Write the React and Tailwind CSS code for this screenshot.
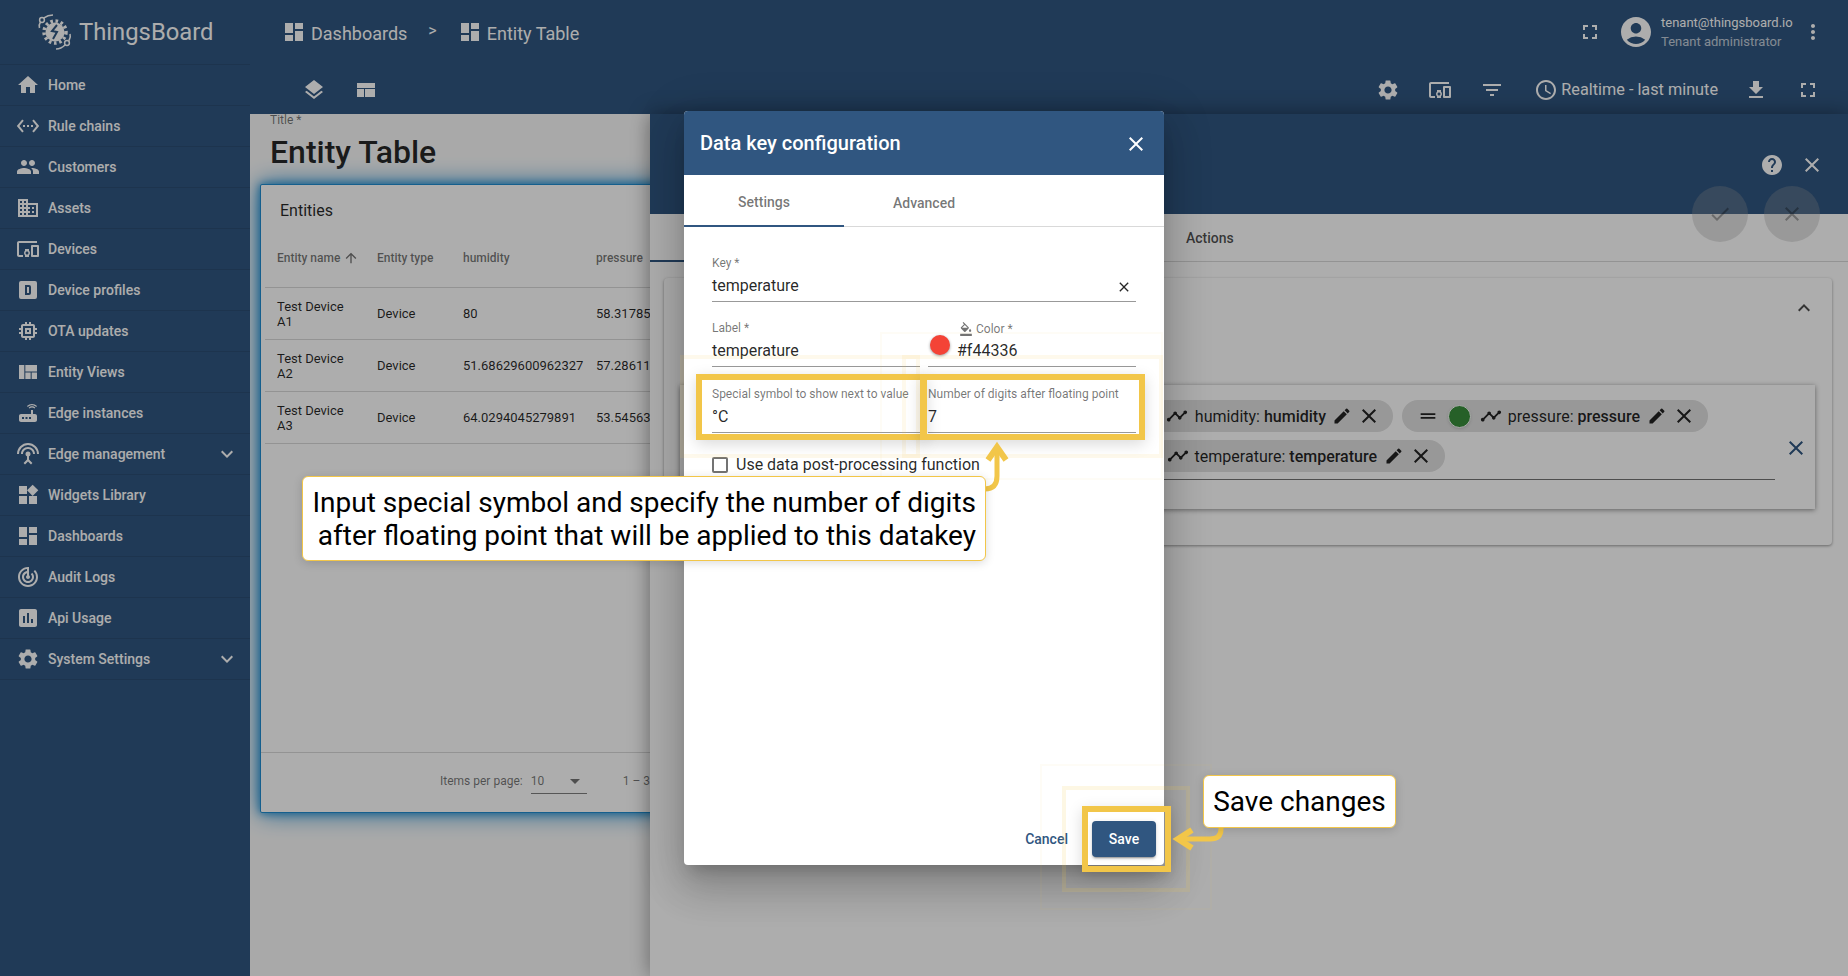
import React from 'react';
import {
  MdHome, MdSettingsEthernet, MdPeople, MdDomain, MdDevicesOther, MdMemory, MdViewQuilt, MdRouter,
  MdSettingsInputAntenna, MdWidgets, MdDashboard, MdTrackChanges, MdInsertChart, MdSettings,
  MdExpandMore, MdLayers, MdFullscreen, MdAccountCircle, MdMoreVert, MdFilterList, MdAccessTime,
  MdFileDownload, MdHelp, MdClose, MdCheck, MdKeyboardArrowUp, MdTimeline, MdEdit, MdDragHandle,
  MdFormatColorFill, MdArrowUpward, MdArrowDropDown,
} from 'react-icons/md';

function DeviceProfileIcon({ size = 24 }) {
  return (
    <svg width={size} height={size} viewBox="0 0 24 24" fill="currentColor">
      <path fillRule="evenodd" d="M5 3H19A2 2 0 0 1 21 5V19A2 2 0 0 1 19 21H5A2 2 0 0 1 3 19V5A2 2 0 0 1 5 3ZM9 7V17H13A2 2 0 0 0 15 15V9A2 2 0 0 0 13 7H9ZM11 9H13V15H11V9Z" />
    </svg>
  );
}

function LayoutIcon() {
  return (
    <svg width="24" height="24" viewBox="0 0 24 24" fill="currentColor">
      <rect x="3" y="5" width="18" height="5" />
      <rect x="3" y="11" width="7" height="8" />
      <rect x="11" y="11" width="10" height="8" />
    </svg>
  );
}

function Logo() {
  return (
    <svg width="40" height="38" viewBox="0 0 40 38" fill="none" stroke="currentColor" className="shrink-0">
      <circle cx="19" cy="19" r="9.5" fill="currentColor" stroke="none" />
      <circle cx="19" cy="19" r="11" strokeWidth="3.5" strokeDasharray="2.6 2.6" />
      <path d="M21 12 L16 18 L21 19 L17 26" strokeWidth="2" stroke="#305680" />
      <circle cx="6" cy="7" r="2.4" strokeWidth="1.5" />
      <circle cx="31" cy="30" r="2.4" strokeWidth="1.5" />
      <path d="M7.5 5.2 Q12 2 17 2" strokeWidth="1.6" />
      <path d="M4.5 9 Q2.5 12 3.5 15" strokeWidth="1.6" />
      <path d="M29 32 Q25 36 20 36" strokeWidth="1.6" />
      <path d="M33 27.5 Q35 24 34 21" strokeWidth="1.6" />
    </svg>
  );
}

const menu = [
  ['Home', MdHome],
  ['Rule chains', MdSettingsEthernet],
  ['Customers', MdPeople],
  ['Assets', MdDomain],
  ['Devices', MdDevicesOther],
  ['Device profiles', DeviceProfileIcon],
  ['OTA updates', MdMemory],
  ['Entity Views', MdViewQuilt],
  ['Edge instances', MdRouter],
  ['Edge management', MdSettingsInputAntenna, true],
  ['Widgets Library', MdWidgets],
  ['Dashboards', MdDashboard],
  ['Audit Logs', MdTrackChanges],
  ['Api Usage', MdInsertChart],
  ['System Settings', MdSettings, true],
];

const rows = [
  ['Test Device', 'A1', '80', '58.31785'],
  ['Test Device', 'A2', '51.68629600962327', '57.28611'],
  ['Test Device', 'A3', '64.0294045279891', '53.54563'],
];

function Sidebar() {
  return (
    <aside className="w-[250px] shrink-0 bg-[#305680] text-white">
      <div className="h-[65px] flex items-center pl-[36px] gap-[3px] border-b border-black/10">
        <Logo />
        <span className="text-[23.8px] leading-none mt-[2px]">ThingsBoard</span>
      </div>
      {menu.map(([label, Icon, more]) => (
        <div key={label} className="h-[41px] flex items-center pl-[16px] pr-[11px] border-b border-black/10">
          <Icon size={24} />
          <span className="ml-[8px] text-[14px] font-medium flex-1">{label}</span>
          {more && <MdExpandMore size={24} />}
        </div>
      ))}
    </aside>
  );
}

function TopBars() {
  return (
    <div className="bg-[#305680] text-white h-[114px] shrink-0">
      <div className="h-[64px] flex items-center pl-[32px] pr-[23px]">
        <MdDashboard size={24} />
        <span className="ml-[5px] text-[18px] mt-[2px]">Dashboards</span>
        <span className="ml-[21px] text-[16px] mb-[3px]">&gt;</span>
        <span className="ml-[21px]"><MdDashboard size={24} /></span>
        <span className="ml-[5px] text-[18px] mt-[2px]">Entity Table</span>
        <span className="flex-1" />
        <MdFullscreen size={24} />
        <MdAccountCircle size={36} className="ml-[16px]" />
        <div className="ml-[7px] w-[140px] text-[13px] leading-[19px] whitespace-nowrap">
          <div>tenant@thingsboard.io</div>
          <div className="opacity-70">Tenant administrator</div>
        </div>
        <MdMoreVert size={24} />
      </div>
      <div className="h-[50px] flex items-center pl-[52px] pr-[28px] pt-[2px]">
        <MdLayers size={24} />
        <span className="ml-[28px]"><LayoutIcon /></span>
        <span className="flex-1" />
        <MdSettings size={24} />
        <MdDevicesOther size={24} className="ml-[28px]" />
        <MdFilterList size={24} className="ml-[28px]" />
        <MdAccessTime size={24} className="ml-[30px]" />
        <span className="ml-[3px] text-[16.25px]">Realtime - last minute</span>
        <MdFileDownload size={24} className="ml-[26px]" />
        <MdFullscreen size={24} className="ml-[28px]" />
      </div>
    </div>
  );
}

function EntitiesWidget() {
  return (
    <div className="h-[629px] ml-[10px] mt-[8px] bg-white border border-[#1f8dd0] shadow-[0_0_8px_#1f8dd0,0_0_24px_#1f8dd0] flex flex-col rounded-[2px]">
      <div className="h-[50px] pl-[19px] flex items-center text-[16px] text-black/85 pt-[1px]">Entities</div>
      <div className="mx-[4px] flex-1 flex flex-col">
        <div className="grid grid-cols-[100px_86px_133px_1fr] h-[53px] pb-[7px] items-center pl-[12px] text-[12px] font-medium text-black/55 border-b border-black/15">
          <div className="flex items-center gap-[3px]">Entity name<MdArrowUpward size={16} /></div>
          <div>Entity type</div>
          <div>humidity</div>
          <div>pressure</div>
        </div>
        {rows.map((row) => (
          <div key={row[1]} className="grid grid-cols-[100px_86px_133px_1fr] h-[52px] items-center pl-[12px] text-[13px] leading-[15px] text-black/85 border-b border-black/15">
            <div>{row[0]}<br />{row[1]}</div>
            <div>Device</div>
            <div>{row[2]}</div>
            <div className="whitespace-nowrap">{row[3]}</div>
          </div>
        ))}
        <div className="flex-1" />
      </div>
      <div className="h-[60px] pb-[4px] border-t border-black/15 flex items-center pl-[179px] text-[12px] text-black/55 whitespace-nowrap">
        <span>Items per page:</span>
        <div className="ml-[8px] w-[56px] h-[26px] border-b border-black/50 flex items-center justify-between mt-[1px]">
          <span>10</span>
          <MdArrowDropDown size={24} />
        </div>
        <span className="ml-[36px] text-[12px]">1 – 3 of 3</span>
      </div>
    </div>
  );
}

function Chip({ width, children }) {
  return (
    <div className={`${width} h-[32px] rounded-full bg-[#e0e0e0] flex items-center justify-end text-[16px] text-black/85 whitespace-nowrap shrink-0`}>
      {children}
    </div>
  );
}

function WidgetPanel() {
  return (
    <div className="absolute left-[650px] right-0 top-[114px] bottom-0 bg-white flex flex-col shadow-[0_0_20px_rgba(0,0,0,0.4)]">
      <div className="h-[100px] bg-[#305680] text-white flex justify-end items-start pt-[39px] pr-[24px] gap-[16px]">
        <MdHelp size={24} />
        <MdClose size={24} />
      </div>
      <div className="h-[48px] flex border-b border-black/15 text-[14px] font-medium text-black/70 shrink-0">
        <div className="w-[120px] h-[48px] border-b-2 border-[#305680]" />
        <div className="ml-[416px] h-[48px] flex items-center">Actions</div>
      </div>
      <div className="mt-[16px] ml-[14px] mr-[16px] h-[267px] rounded-[4px] shadow-[0_1px_3px_rgba(0,0,0,0.4)] flex flex-col">
        <div className="h-[107px] flex justify-end pr-[16px] pt-[18px] text-black/70">
          <MdKeyboardArrowUp size={24} />
        </div>
        <div className="h-[124px] ml-[16px] mr-[17px] shadow-[0_1px_5px_rgba(0,0,0,0.45)] flex">
          <div className="ml-[0px] flex-1 pt-[15px] mr-[9px] relative">
            <div className="flex gap-[9px] pl-[470px]">
              <Chip width="w-[243px]">
                <MdTimeline size={22} />
                <span className="ml-[7px] mt-[1px]">humidity: <span className="font-medium">humidity</span></span>
                <MdEdit size={20} className="ml-[6px]" />
                <MdClose size={24} className="ml-[5px] mr-[12px]" />
              </Chip>
              <Chip width="w-[306px]">
                <MdDragHandle size={22} />
                <span className="ml-[9px] w-[23px] h-[23px] rounded-full bg-[#388e3c] border-[1px] border-white shadow-sm" />
                <MdTimeline size={22} className="ml-[9px]" />
                <span className="ml-[6px] mt-[1px]">pressure: <span className="font-medium">pressure</span></span>
                <MdEdit size={20} className="ml-[7px]" />
                <MdClose size={24} className="ml-[5px] mr-[12px]" />
              </Chip>
            </div>
            <div className="flex mt-[8px] pl-[470px] pb-[7px] border-b border-black/55">
              <Chip width="w-[295px]">
                <MdTimeline size={22} />
                <span className="ml-[6px] mt-[1px]">temperature: <span className="font-medium">temperature</span></span>
                <MdEdit size={20} className="ml-[7px]" />
                <MdClose size={24} className="ml-[5px] mr-[12px]" />
              </Chip>
            </div>
          </div>
          <div className="w-[31px] flex items-start pt-[51px] text-[#305680]">
            <MdClose size={24} />
          </div>
        </div>
      </div>
    </div>
  );
}

function Field({ label, value, right, className = '' }) {
  return (
    <div className={`flex flex-col h-[47px] pt-[1px] border-b border-black/40 ${className}`}>
      <div className="h-[14px] text-[12px] leading-[14px] text-black/55 whitespace-nowrap">{label}</div>
      <div className="mt-[4px] h-[24px] text-[16px] leading-[24px] text-black/85 flex items-center justify-between">
        <span>{value}</span>
        {right}
      </div>
    </div>
  );
}

function Dialog() {
  return (
    <div className="absolute z-20 left-[684px] top-[111px] w-[480px] h-[754px] bg-white rounded-[4px] flex flex-col shadow-[0_11px_15px_-7px_rgba(0,0,0,0.2),0_24px_38px_3px_rgba(0,0,0,0.14),0_9px_46px_8px_rgba(0,0,0,0.12)]">
      <div className="h-[64px] shrink-0 bg-[#305680] text-white rounded-t-[4px] flex items-center justify-between pl-[16px] pr-[16px]">
        <span className="text-[20px] font-medium">Data key configuration</span>
        <MdClose size={24} className="mt-[2px]" />
      </div>
      <div className="h-[52px] shrink-0 flex border-b border-black/15 text-[14px] font-medium text-black/55">
        <div className="w-[160px] h-[52px] pt-[4px] flex items-center justify-center border-b-[2px] border-[#305680]">Settings</div>
        <div className="w-[160px] h-[52px] pt-[4px] flex items-center justify-center">Advanced</div>
      </div>
      <div className="flex-1 px-[28px] pt-[28px]">
        <Field label="Key *" value="temperature" right={<MdClose size={16} className="text-black/85 mr-[4px] mt-[2px]" />} />
        <div className="mt-[18px] grid grid-cols-2 gap-[8px]">
          <Field label="Label *" value="temperature" />
          <div className="flex flex-col h-[47px] pt-[1px] border-b border-black/40">
            <div className="h-[14px] pl-[31px] text-[12px] leading-[14px] text-black/55 flex items-center gap-[3px] mt-[1px]">
              <MdFormatColorFill size={14} /> Color *
            </div>
            <div className="mt-[3px] h-[24px] flex items-center text-[16px] text-black/85">
              <span className="ml-[2px] w-[20px] h-[20px] rounded-full bg-[#f44336] shadow-[0_1px_3px_rgba(0,0,0,0.4)] mb-[12px]" />
              <span className="ml-[7px]">#f44336</span>
            </div>
          </div>
        </div>
        <div className="mt-[19px] grid grid-cols-2 gap-[8px]">
          <Field label="Special symbol to show next to value" value="°C" />
          <Field label="Number of digits after floating point" value="7" />
        </div>
        <div className="mt-[24px] flex items-center h-[16px]">
          <span className="w-[16px] h-[16px] border-2 border-black/55 rounded-[2px]" />
          <span className="ml-[8px] text-[16px] text-black/85 whitespace-nowrap">Use data post-processing function</span>
        </div>
      </div>
      <div className="flex justify-end items-center pr-[8px] pb-[8px] gap-[8px]">
        <div className="h-[36px] px-[16px] flex items-center text-[14px] font-medium text-[#305680]">Cancel</div>
        <div className="w-[64px] h-[36px] rounded-[4px] bg-[#305680] text-white text-[14px] font-medium flex items-center justify-center shadow-[0_3px_1px_-2px_rgba(0,0,0,0.2),0_2px_2px_rgba(0,0,0,0.14),0_1px_5px_rgba(0,0,0,0.12)]">Save</div>
      </div>
    </div>
  );
}

function Annotations() {
  return (
    <div className="absolute inset-0 z-30 pointer-events-none">
      {/* faint pulse rings */}
      <div className="absolute left-[680px] top-[355px] w-[240px] h-[103px] border-[4px] border-[#f2c649]/10" />
      <div className="absolute left-[902px] top-[355px] w-[261px] h-[103px] border-[4px] border-[#f2c649]/10" />
      <div className="absolute left-[880px] top-[332px] w-[283px] h-[148px] border-[2px] border-[#f2c649]/5" />
      <div className="absolute left-[1062px] top-[786px] w-[128px] h-[106px] border-[4px] border-[#f2c649]/15" />
      <div className="absolute left-[1040px] top-[764px] w-[172px] h-[146px] border-[2px] border-[#f2c649]/5" />

      <div className="absolute left-[696px] top-[374px] w-[231px] h-[66px] border-[6px] border-[#f2c649] shadow-[0_4px_14px_rgba(0,0,0,0.15)]" />
      <div className="absolute left-[920px] top-[374px] w-[225px] h-[66px] border-[6px] border-[#f2c649] shadow-[0_4px_14px_rgba(0,0,0,0.15)]" />
      <div className="absolute left-[1082px] top-[806px] w-[89px] h-[66px] border-[6px] border-[#f2c649] shadow-[0_4px_14px_rgba(0,0,0,0.15)]" />

      <svg className="absolute left-[980px] top-[438px]" width="36" height="60" viewBox="980 438 36 60" fill="none" stroke="#f2c649" strokeWidth="5">
        <path d="M985 489 Q997 489 997 476 L997 448" />
        <path d="M988 460 L997 447 L1006 460" strokeWidth="6" />
      </svg>
      <svg className="absolute left-[1170px] top-[824px]" width="60" height="32" viewBox="1170 824 60 32" fill="none" stroke="#f2c649" strokeWidth="5">
        <path d="M1221 826 L1221 829 Q1221 839 1210 839 L1180 839" />
        <path d="M1192 830 L1178 839 L1192 848" strokeWidth="6" />
      </svg>

      <div className="absolute left-[302px] top-[476px] w-[684px] h-[85px] bg-white border-[1.5px] border-[#f2c649] rounded-[6px] shadow-[0_2px_10px_rgba(0,0,0,0.15)] pr-[9px] pt-[9px] text-right text-[28px] leading-[33px] text-black whitespace-pre">
        Input special symbol and specify the number of digits{'\n'}after floating point that will be applied to this datakey
      </div>
      <div className="absolute left-[1203px] top-[775px] w-[193px] h-[53px] bg-white border-[1.5px] border-[#f2c649] rounded-[6px] shadow-[0_2px_10px_rgba(0,0,0,0.15)] flex items-center justify-center text-[28px] text-black">
        Save changes
      </div>
    </div>
  );
}

export default function App() {
  return (
    <div className="relative w-full h-screen overflow-hidden flex font-['Roboto',sans-serif] bg-white">
      <Sidebar />
      <div className="flex-1 flex flex-col min-w-0 bg-[#fafafa] overflow-hidden">
        <TopBars />
        <div className="w-[500px] flex-1 flex flex-col">
          <div className="h-[62px] pl-[20px] shrink-0">
            <div className="text-[12px] leading-[12px] text-black/55">Title *</div>
            <div className="text-[32px] leading-[37px] mt-[8px] font-medium text-black/85 whitespace-nowrap">Entity Table</div>
          </div>
          <EntitiesWidget />
        </div>
      </div>
      <WidgetPanel />
      <div className="absolute left-[1692px] top-[186px] w-[56px] h-[56px] rounded-full bg-[#a0a0a0]/30 flex items-center justify-center text-black/30"><MdCheck size={24} /></div>
      <div className="absolute left-[1764px] top-[186px] w-[56px] h-[56px] rounded-full bg-[#a0a0a0]/30 flex items-center justify-center text-black/30"><MdClose size={24} /></div>
      <div className="absolute inset-0 z-10 bg-black/32" />
      <Dialog />
      <Annotations />
    </div>
  );
}
